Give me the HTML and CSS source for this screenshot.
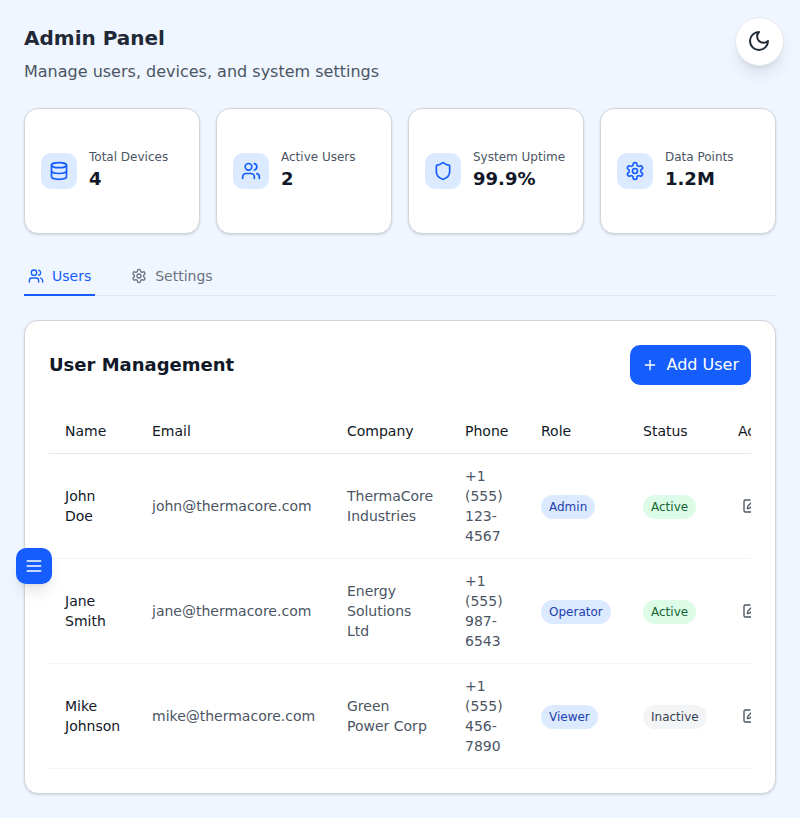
FILE: index.html
```html
<!doctype html>
<html lang="en">
<head>
    <meta charset="UTF-8">
    <meta name="viewport" content="width=device-width, initial-scale=1.0">
    <title>Admin Panel</title>
    <link rel="stylesheet" href="styles.css">
</head>
<body>
<svg class="sprite" width="0" height="0">
    <symbol id="i-database" viewBox="0 0 24 24"><ellipse cx="12" cy="5" rx="9" ry="3"/><path d="M3 5V19A9 3 0 0 0 21 19V5"/><path d="M3 12A9 3 0 0 0 21 12"/></symbol>
    <symbol id="i-users" viewBox="0 0 24 24"><path d="M16 21v-2a4 4 0 0 0-4-4H6a4 4 0 0 0-4 4v2"/><circle cx="9" cy="7" r="4"/><path d="M22 21v-2a4 4 0 0 0-3-3.87"/><path d="M16 3.13a4 4 0 0 1 0 7.75"/></symbol>
    <symbol id="i-shield" viewBox="0 0 24 24"><path d="M20 13c0 5-3.5 7.5-7.66 8.95a1 1 0 0 1-.67-.01C7.5 20.5 4 18 4 13V6a1 1 0 0 1 1-1c2 0 4.5-1.2 6.24-2.72a1.17 1.17 0 0 1 1.52 0C14.51 3.81 17 5 19 5a1 1 0 0 1 1 1z"/></symbol>
    <symbol id="i-settings" viewBox="0 0 24 24"><path d="M12.22 2h-.44a2 2 0 0 0-2 2v.18a2 2 0 0 1-1 1.73l-.43.25a2 2 0 0 1-2 0l-.15-.08a2 2 0 0 0-2.73.73l-.22.38a2 2 0 0 0 .73 2.73l.15.1a2 2 0 0 1 1 1.72v.51a2 2 0 0 1-1 1.74l-.15.09a2 2 0 0 0-.73 2.73l.22.38a2 2 0 0 0 2.73.73l.15-.08a2 2 0 0 1 2 0l.43.25a2 2 0 0 1 1 1.73V20a2 2 0 0 0 2 2h.44a2 2 0 0 0 2-2v-.18a2 2 0 0 1 1-1.73l.43-.25a2 2 0 0 1 2 0l.15.08a2 2 0 0 0 2.73-.73l.22-.39a2 2 0 0 0-.73-2.73l-.15-.08a2 2 0 0 1-1-1.74v-.5a2 2 0 0 1 1-1.74l.15-.09a2 2 0 0 0 .73-2.73l-.22-.38a2 2 0 0 0-2.73-.73l-.15.08a2 2 0 0 1-2 0l-.43-.25a2 2 0 0 1-1-1.73V4a2 2 0 0 0-2-2z"/><circle cx="12" cy="12" r="3"/></symbol>
    <symbol id="i-moon" viewBox="0 0 24 24"><path d="M12 3a6 6 0 0 0 9 9 9 9 0 1 1-9-9Z"/></symbol>
    <symbol id="i-plus" viewBox="0 0 24 24"><path d="M5 12h14"/><path d="M12 5v14"/></symbol>
    <symbol id="i-menu" viewBox="0 0 24 24"><path d="M4 12h16"/><path d="M4 6h16"/><path d="M4 18h16"/></symbol>
    <symbol id="i-pen" viewBox="0 0 24 24"><path d="M12 3H5a2 2 0 0 0-2 2v14a2 2 0 0 0 2 2h14a2 2 0 0 0 2-2v-7"/><path d="M18.375 2.625a1 1 0 0 1 3 3l-9.013 9.014a2 2 0 0 1-.853.505l-2.873.84a.5.5 0 0 1-.62-.62l.84-2.873a2 2 0 0 1 .506-.852z"/></symbol>
</svg>

<button class="theme-btn"><svg class="icon icon-24"><use href="#i-moon"/></svg></button>
<button class="menu-btn"><svg class="icon icon-20"><use href="#i-menu"/></svg></button>

<header class="page-head">
    <h1>Admin Panel</h1>
    <p>Manage users, devices, and system settings</p>
</header>

<section class="stats">
    <div class="stat">
        <div class="stat-icon"><svg class="icon icon-20"><use href="#i-database"/></svg></div>
        <div><div class="stat-label">Total Devices</div><div class="stat-value">4</div></div>
    </div>
    <div class="stat">
        <div class="stat-icon"><svg class="icon icon-20"><use href="#i-users"/></svg></div>
        <div><div class="stat-label">Active Users</div><div class="stat-value">2</div></div>
    </div>
    <div class="stat">
        <div class="stat-icon"><svg class="icon icon-20"><use href="#i-shield"/></svg></div>
        <div><div class="stat-label">System Uptime</div><div class="stat-value">99.9%</div></div>
    </div>
    <div class="stat">
        <div class="stat-icon"><svg class="icon icon-20"><use href="#i-settings"/></svg></div>
        <div><div class="stat-label">Data Points</div><div class="stat-value">1.2M</div></div>
    </div>
</section>

<nav class="tabs">
    <a class="tab active"><svg class="icon icon-16"><use href="#i-users"/></svg>Users</a>
    <a class="tab"><svg class="icon icon-16"><use href="#i-settings"/></svg>Settings</a>
</nav>

<section class="panel">
    <div class="panel-head">
        <h2>User Management</h2>
        <button class="add-btn"><svg class="icon icon-16"><use href="#i-plus"/></svg>Add User</button>
    </div>
    <div class="table-wrap">
        <table>
            <colgroup>
                <col class="c-name"><col class="c-email"><col class="c-company"><col class="c-phone"><col class="c-role"><col class="c-status"><col class="c-actions">
            </colgroup>
            <thead>
            <tr><th>Name</th><th>Email</th><th>Company</th><th>Phone</th><th>Role</th><th>Status</th><th>Actions</th></tr>
            </thead>
            <tbody>
            <tr>
                <td class="name">John Doe</td>
                <td>john@thermacore.com</td>
                <td>ThermaCore Industries</td>
                <td>+1 (555) 123-4567</td>
                <td><span class="badge blue">Admin</span></td>
                <td><span class="badge green">Active</span></td>
                <td><button class="edit-btn"><svg class="icon icon-16"><use href="#i-pen"/></svg></button></td>
            </tr>
            <tr>
                <td class="name">Jane Smith</td>
                <td>jane@thermacore.com</td>
                <td>Energy Solutions Ltd</td>
                <td>+1 (555) 987-6543</td>
                <td><span class="badge blue">Operator</span></td>
                <td><span class="badge green">Active</span></td>
                <td><button class="edit-btn"><svg class="icon icon-16"><use href="#i-pen"/></svg></button></td>
            </tr>
            <tr>
                <td class="name">Mike Johnson</td>
                <td>mike@thermacore.com</td>
                <td>Green Power Corp</td>
                <td>+1 (555) 456-7890</td>
                <td><span class="badge blue">Viewer</span></td>
                <td><span class="badge gray">Inactive</span></td>
                <td><button class="edit-btn"><svg class="icon icon-16"><use href="#i-pen"/></svg></button></td>
            </tr>
            </tbody>
        </table>
    </div>
</section>
</body>
</html>
```
FILE: styles.css
```css
* {
    margin: 0;
    padding: 0;
    box-sizing: border-box;
}

body {
    padding: 24px;
    background: #eff6ff;
    color: #111827;
    font-family: "DejaVu Sans", sans-serif;
}

button {
    border: 0;
    font: inherit;
}

.sprite {
    position: absolute;
}

.icon {
    display: block;
    flex-shrink: 0;
    fill: none;
    stroke: currentColor;
    stroke-width: 2;
    stroke-linecap: round;
    stroke-linejoin: round;
}

.icon-16 { width: 16px; height: 16px; }
.icon-20 { width: 20px; height: 20px; }
.icon-24 { width: 24px; height: 24px; }

/* floating buttons */
.theme-btn {
    position: fixed;
    top: 16.5px;
    right: 16.5px;
    width: 49px;
    height: 49px;
    display: flex;
    align-items: center;
    justify-content: center;
    background: #fff;
    color: #1f2937;
    border: 1px solid #e5e7eb;
    border-radius: 50%;
    box-shadow: 0 10px 15px -3px rgba(0, 0, 0, .1), 0 4px 6px -4px rgba(0, 0, 0, .1);
}

.menu-btn {
    position: fixed;
    top: 548px;
    left: 16px;
    width: 36px;
    height: 36px;
    display: flex;
    align-items: center;
    justify-content: center;
    background: #155dfc;
    color: #fff;
    border-radius: 10px;
    box-shadow: 0 10px 15px -3px rgba(0, 0, 0, .1), 0 4px 6px -4px rgba(0, 0, 0, .1);
}

/* header */
.page-head {
    margin-bottom: 24px;
}

.page-head h1 {
    font-size: 20px;
    line-height: 28px;
    font-weight: 700;
    color: #1f2937;
    margin-bottom: 8px;
}

.page-head p {
    font-size: 16px;
    line-height: 24px;
    color: #4b5563;
}

/* stat cards */
.stats {
    display: grid;
    grid-template-columns: repeat(4, 1fr);
    gap: 16px;
    margin-bottom: 24px;
}

.stat {
    height: 126px;
    display: flex;
    align-items: center;
    gap: 12px;
    padding: 16px;
    background: #fff;
    border: 1px solid #d1d5db;
    border-radius: 14px;
    box-shadow: 0 1px 3px rgba(0, 0, 0, .1), 0 1px 2px -1px rgba(0, 0, 0, .1);
}

.stat-icon {
    width: 36px;
    height: 36px;
    display: flex;
    align-items: center;
    justify-content: center;
    flex-shrink: 0;
    background: #dbeafe;
    color: #155dfc;
    border-radius: 10px;
}

.stat-label {
    font-size: 12px;
    line-height: 16px;
    color: #4b5563;
}

.stat-value {
    font-size: 18px;
    line-height: 28px;
    font-weight: 700;
    color: #111827;
}

/* tabs */
.tabs {
    display: flex;
    gap: 32px;
    border-bottom: 1px solid #e5e7eb;
    margin-bottom: 24px;
}

.tab {
    display: flex;
    align-items: center;
    gap: 8px;
    padding: 8px 4px;
    font-size: 14px;
    line-height: 20px;
    color: #6b7280;
    border-bottom: 2px solid transparent;
    margin-bottom: -1px;
}

.tab.active {
    color: #155dfc;
    border-bottom-color: #155dfc;
}

/* user table */
.panel {
    padding: 24px;
    background: #fff;
    border: 1px solid #d1d5db;
    border-radius: 14px;
    box-shadow: 0 1px 3px rgba(0, 0, 0, .1), 0 1px 2px -1px rgba(0, 0, 0, .1);
}

.panel-head {
    display: flex;
    align-items: center;
    justify-content: space-between;
    margin-bottom: 24px;
}

.panel-head h2 {
    font-size: 18px;
    line-height: 28px;
    font-weight: 700;
    color: #111827;
}

.add-btn {
    display: flex;
    align-items: center;
    gap: 8px;
    height: 40px;
    padding: 0 12px;
    background: #155dfc;
    color: #fff;
    border-radius: 10px;
    font-size: 16px;
    line-height: 24px;
}

.table-wrap {
    overflow: hidden;
}

table {
    width: 820px;
    table-layout: fixed;
    border-collapse: collapse;
    font-size: 14px;
    line-height: 20px;
}

.c-name { width: 87px; }
.c-email { width: 195px; }
.c-company { width: 118px; }
.c-phone { width: 76px; }
.c-role { width: 102px; }
.c-status { width: 95px; }
.c-actions { width: 147px; }

th {
    padding: 12px 16px;
    text-align: left;
    font-weight: 400;
    color: #111827;
    border-bottom: 1px solid #e5e7eb;
}

td {
    padding: 12px 16px;
    color: #4b5563;
    border-bottom: 1px solid #f3f4f6;
    vertical-align: middle;
}

td.name {
    color: #111827;
}

.badge {
    display: inline-block;
    vertical-align: -2px;
    padding: 4px 8px;
    border-radius: 9999px;
    font-size: 12px;
    line-height: 16px;
}

.badge.blue { background: #dbeafe; color: #1e40af; }
.badge.green { background: #dcfce7; color: #166534; }
.badge.gray { background: #f3f4f6; color: #374151; }

.edit-btn {
    display: block;
    padding: 4px;
    background: none;
    color: #4b5563;
}
```
